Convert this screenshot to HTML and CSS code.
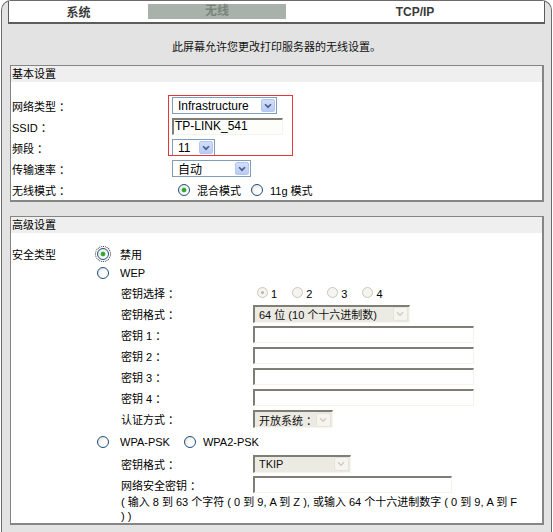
FILE: index.html
```html
<!DOCTYPE html>
<html lang="zh-CN">
<head>
    <meta charset="UTF-8">
    <title>无线设置</title>
    <link rel="stylesheet" href="styles.css">
</head>
<body>

    <div class="frame">
        <div class="tabs">
            <div class="tab">系统</div>
            <div class="tab active">无线</div>
            <div class="tab">TCP/IP</div>
        </div>

        <p class="intro">此屏幕允许您更改打印服务器的无线设置。</p>

        <!-- 基本设置 -->
        <div class="panel basic">
            <div class="panel-title">基本设置</div>
            <div class="panel-body">
                <div class="mark"></div>
                <div class="row">
                    <span class="label">网络类型 ：</span>
                    <span class="combo" style="width: 105px">
                        <span class="combo-text">Infrastructure</span>
                        <span class="combo-btn"><svg viewBox="0 0 14 13"><path d="M3.5 5 L7 8.5 L10.5 5"/></svg></span>
                    </span>
                </div>
                <div class="row">
                    <span class="label">SSID ：</span>
                    <span class="field ssid">TP-LINK_541</span>
                </div>
                <div class="row">
                    <span class="label">频段 ：</span>
                    <span class="combo" style="width: 43px">
                        <span class="combo-text">11</span>
                        <span class="combo-btn"><svg viewBox="0 0 14 13"><path d="M3.5 5 L7 8.5 L10.5 5"/></svg></span>
                    </span>
                </div>
                <div class="row">
                    <span class="label">传输速率 ：</span>
                    <span class="combo" style="width: 79px">
                        <span class="combo-text">自动</span>
                        <span class="combo-btn"><svg viewBox="0 0 14 13"><path d="M3.5 5 L7 8.5 L10.5 5"/></svg></span>
                    </span>
                </div>
                <div class="row">
                    <span class="label">无线模式 ：</span>
                    <span class="radio checked mode-first"></span><span class="opt">混合模式</span>
                    <span class="radio"></span><span class="opt">11g 模式</span>
                </div>
            </div>
        </div>

        <!-- 高级设置 -->
        <div class="panel advanced">
            <div class="panel-title">高级设置</div>
            <div class="panel-body">
                <div class="row h18">
                    <span class="label sec-label">安全类型</span>
                    <span class="radio checked focus"></span><span class="opt wide">禁用</span>
                </div>
                <div class="row h19">
                    <span class="label sec-label"></span>
                    <span class="radio"></span><span class="opt wide">WEP</span>
                </div>
                <div class="row sub">
                    <span class="label sub-label">密钥选择 ：</span>
                    <span class="key-pick">
                        <span class="radio disabled checked"></span><span class="digit">1</span>
                        <span class="radio disabled"></span><span class="digit">2</span>
                        <span class="radio disabled"></span><span class="digit">3</span>
                        <span class="radio disabled"></span><span class="digit">4</span>
                    </span>
                </div>
                <div class="row sub">
                    <span class="label sub-label">密钥格式 ：</span>
                    <span class="combo off" style="width: 157px">
                        <span class="combo-text">64 位 (10 个十六进制数)</span>
                        <span class="combo-btn"><svg viewBox="0 0 14 13"><path d="M3.5 5 L7 8.5 L10.5 5"/></svg></span>
                    </span>
                </div>
                <div class="row sub">
                    <span class="label sub-label">密钥 1 ：</span>
                    <span class="field" style="width: 221px"></span>
                </div>
                <div class="row sub">
                    <span class="label sub-label">密钥 2 ：</span>
                    <span class="field" style="width: 221px"></span>
                </div>
                <div class="row sub">
                    <span class="label sub-label">密钥 3 ：</span>
                    <span class="field" style="width: 221px"></span>
                </div>
                <div class="row sub">
                    <span class="label sub-label">密钥 4 ：</span>
                    <span class="field" style="width: 221px"></span>
                </div>
                <div class="row sub h22">
                    <span class="label sub-label">认证方式 ：</span>
                    <span class="combo off" style="width: 80px">
                        <span class="combo-text">开放系统 ：</span>
                        <span class="combo-btn"><svg viewBox="0 0 14 13"><path d="M3.5 5 L7 8.5 L10.5 5"/></svg></span>
                    </span>
                </div>
                <div class="row h23">
                    <span class="label sec-label"></span>
                    <span class="radio"></span><span class="opt wide">WPA-PSK</span>
                    <span class="radio"></span><span class="opt">WPA2-PSK</span>
                </div>
                <div class="row sub">
                    <span class="label sub-label">密钥格式 ：</span>
                    <span class="combo off" style="width: 98px">
                        <span class="combo-text">TKIP</span>
                        <span class="combo-btn"><svg viewBox="0 0 14 13"><path d="M3.5 5 L7 8.5 L10.5 5"/></svg></span>
                    </span>
                </div>
                <div class="row sub">
                    <span class="label sub-label">网络安全密钥 ：</span>
                    <span class="field" style="width: 199px"></span>
                </div>
                <div class="note">( 输入 8 到 63 个字符 ( 0 到 9, A 到 Z ), 或输入 64 个十六进制数字 ( 0 到 9, A 到 F<br>) )</div>
            </div>
        </div>
    </div>

</body>
</html>
```

FILE: styles.css
```css
html, body {
    margin: 0;
    padding: 0;
    overflow: hidden;
}

body {
    font-family: "Liberation Sans", "Noto Sans CJK SC", sans-serif;
    font-size: 11px;
    color: #000;
    background: #fff;
}

.frame {
    box-sizing: border-box;
    height: 532px;
    margin: 0 1px;
    padding: 0 6px;
    background: #e3e3e3;
    border: 1px solid #6b6b6b;
    border-bottom: none;
    border-radius: 10px 10px 0 0;
}

/* tab strip */
.tabs {
    display: grid;
    grid-template-columns: 139px 138px 1fr;
    align-items: center;
    height: 21px;
    background: #fff;
    border: 1px solid #5c5c5c;
    border-top: none;
    border-bottom-width: 2px;
}

.tab {
    text-align: center;
    font-size: 12px;
    font-weight: bold;
    color: #3a3a3a;
}

.tab.active {
    height: 15px;
    line-height: 15px;
    background: #a9b1ab;
    color: #79847c;
}

.intro {
    margin: 16px 0 11px;
    line-height: 14px;
    text-align: center;
    color: #111;
}

/* panels */
.panel {
    margin: 0 1px 0 2px;
    background: #fff;
    border: 1px solid #858585;
    border-right-width: 2px;
    border-bottom-width: 2px;
}

.advanced {
    margin-top: 14px;
}

.panel-title {
    height: 16px;
    line-height: 16px;
    padding-left: 1px;
    background: #efefef;
}

.panel-body {
    position: relative;
}

.basic .panel-body {
    padding-top: 13px;
}

.advanced .panel-body {
    padding-top: 12px;
}

.mark {
    position: absolute;
    left: 157px;
    top: 13px;
    width: 123px;
    height: 59px;
    border: 1px solid #e8353a;
}

.row {
    display: flex;
    align-items: center;
    height: 21px;
}

.row.h18 { height: 18px; }
.row.h19 { height: 19px; }
.row.h22 { height: 22px; }
.row.h23 { height: 23px; }

.label {
    flex: none;
    width: 160px;
    padding-left: 1px;
    white-space: nowrap;
}

.sec-label {
    width: 85px;
}

.sub {
    padding-left: 109px;
}

.sub-label {
    width: 132px;
    padding-left: 1px;
}

.opt {
    margin: 0 10px 0 7px;
}

.opt.wide {
    margin: 0 14px 0 11px;
}

.mode-first {
    margin-left: 6px;
}

/* XP style select */
.combo {
    box-sizing: border-box;
    display: flex;
    align-items: center;
    height: 17px;
    padding: 1px;
    border: 1px solid #7f9db9;
    background: #fff;
    font-size: 12px;
}

.combo-text {
    flex: 1;
    padding-left: 4px;
    white-space: nowrap;
    overflow: hidden;
}

.combo-btn {
    flex: none;
    width: 14px;
    height: 13px;
    border: 1px solid #b5c6ee;
    border-radius: 2px;
    box-sizing: border-box;
    background: linear-gradient(#d3defc, #b8cbf7);
}

.combo-btn svg {
    display: block;
    width: 12px;
    height: 11px;
}

.combo-btn path {
    fill: none;
    stroke: #4d6185;
    stroke-width: 2;
}

.combo.off {
    height: 18px;
    border: none;
    border-top: 2px solid #7e7d76;
    border-left: 2px solid #7e7d76;
    border-right: 1px solid #f6f5ee;
    border-bottom: 1px solid #f6f5ee;
    background: #ecebe3;
    color: #111;
    font-size: 11px;
}

.combo.off .combo-text {
    padding-left: 3px;
}

.combo.off .combo-btn {
    width: 15px;
    height: 14px;
    border-color: #e6e4da;
    background: #f5f4ee;
}

.combo.off .combo-btn path {
    stroke: #cfcdc2;
    stroke-width: 1.6;
}

/* text boxes */
.field {
    box-sizing: border-box;
    display: block;
    height: 17px;
    background: #fff;
    border-top: 2px solid #7e7d76;
    border-left: 2px solid #7e7d76;
    border-right: 1px solid #f4f3ec;
    border-bottom: 1px solid #f4f3ec;
}

.ssid {
    width: 111px;
    padding-left: 1px;
    font-size: 12px;
    line-height: 13px;
    background: #fdfdfa;
}

/* radios */
.radio {
    flex: none;
    position: relative;
    box-sizing: border-box;
    width: 12px;
    height: 12px;
    border: 1px solid #1f5180;
    border-radius: 50%;
    background: radial-gradient(circle at 65% 65%, #fff 30%, #dcd9cc);
}

.radio.checked::after {
    content: "";
    position: absolute;
    left: 3px;
    top: 3px;
    width: 4px;
    height: 4px;
    border-radius: 50%;
    background: #2ea32e;
    box-shadow: 0 0 0 0.5px #6fcb6f;
}

.radio.focus {
    outline: 1px dotted #222;
    outline-offset: 1px;
}

.radio.disabled {
    width: 11px;
    height: 11px;
    border-color: #cbc8bb;
    background: #f5f4f0;
}

.radio.disabled.checked::after {
    left: 3px;
    top: 3px;
    width: 3px;
    height: 3px;
    background: #b7b4a6;
    box-shadow: none;
}

.key-pick {
    display: flex;
    align-items: center;
    padding-left: 4px;
}

.digit {
    margin: 3px 15px 0 3px;
    font-size: 11px;
}

.note {
    margin-left: 110px;
    line-height: 14px;
    white-space: nowrap;
}
```
